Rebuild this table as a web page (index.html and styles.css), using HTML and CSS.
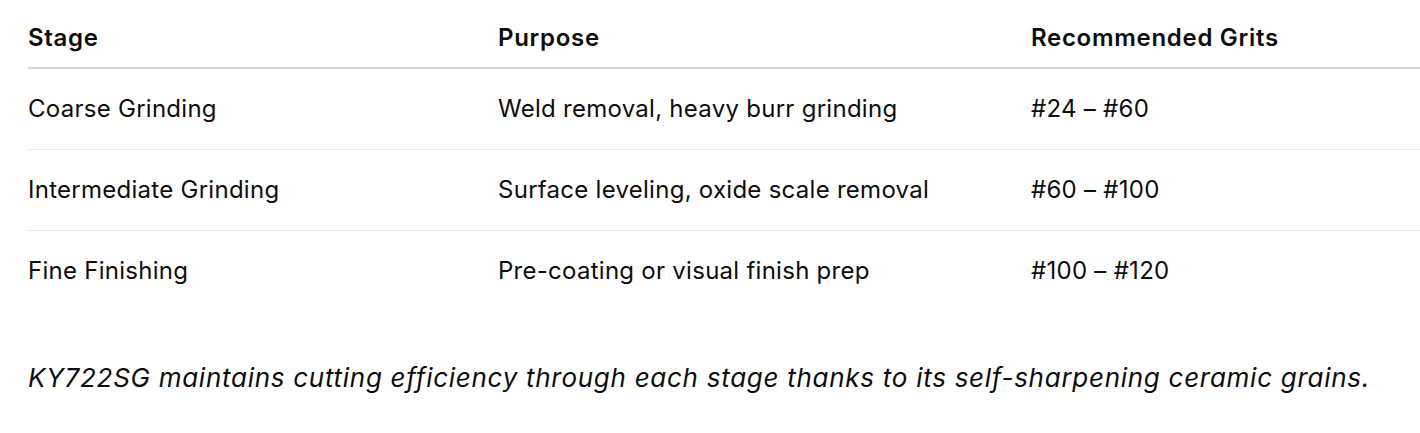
FILE: index.html
```html
<!DOCTYPE html>
<html lang="en">
<head>
<meta charset="utf-8">
<link rel="stylesheet" href="styles.css">
</head>
<body>
<div class="page">
  <table class="grits">
    <colgroup>
      <col class="c1"><col class="c2"><col class="c3">
    </colgroup>
    <thead>
      <tr><th>Stage</th><th>Purpose</th><th>Recommended Grits</th></tr>
    </thead>
    <tbody>
      <tr><td>Coarse Grinding</td><td>Weld removal, heavy burr grinding</td><td>#24 – #60</td></tr>
      <tr><td>Intermediate Grinding</td><td>Surface leveling, oxide scale removal</td><td>#60 – #100</td></tr>
      <tr><td>Fine Finishing</td><td>Pre-coating or visual finish prep</td><td>#100 – #120</td></tr>
    </tbody>
  </table>
  <p class="note"><em>KY722SG maintains cutting efficiency through each stage thanks to its self-sharpening ceramic grains.</em></p>
</div>
</body>
</html>
```
FILE: styles.css
```css
html, body {
  margin: 0;
  padding: 0;
  background: #ffffff;
}
body {
  font-family: Inter, "Noto Sans", "Liberation Sans", sans-serif;
  font-size: 24px;
  line-height: 36px;
  color: #0d0d0d;
}
.page {
  padding-left: 28px;
}
.grits {
  width: 100%;
  border-collapse: collapse;
  table-layout: fixed;
}
.c1 { width: 470px; }
.c2 { width: 533px; }
.grits th {
  text-align: left;
  font-weight: 600;
  letter-spacing: 0.7px;
  padding: 20px 0 11px 0;
  border-bottom: 2px solid #d6d6d6;
}
.grits td {
  letter-spacing: 0.27px;
  padding: 22px 0 22px 0;
  border-bottom: 1px solid #ececec;
}
.grits tbody tr:last-child td {
  border-bottom: none;
}
.note {
  margin: 49px 0 0 0;
  font-size: 26px;
  line-height: 36px;
  letter-spacing: 0.72px;
}
.note em {
  font-style: italic;
}
```
